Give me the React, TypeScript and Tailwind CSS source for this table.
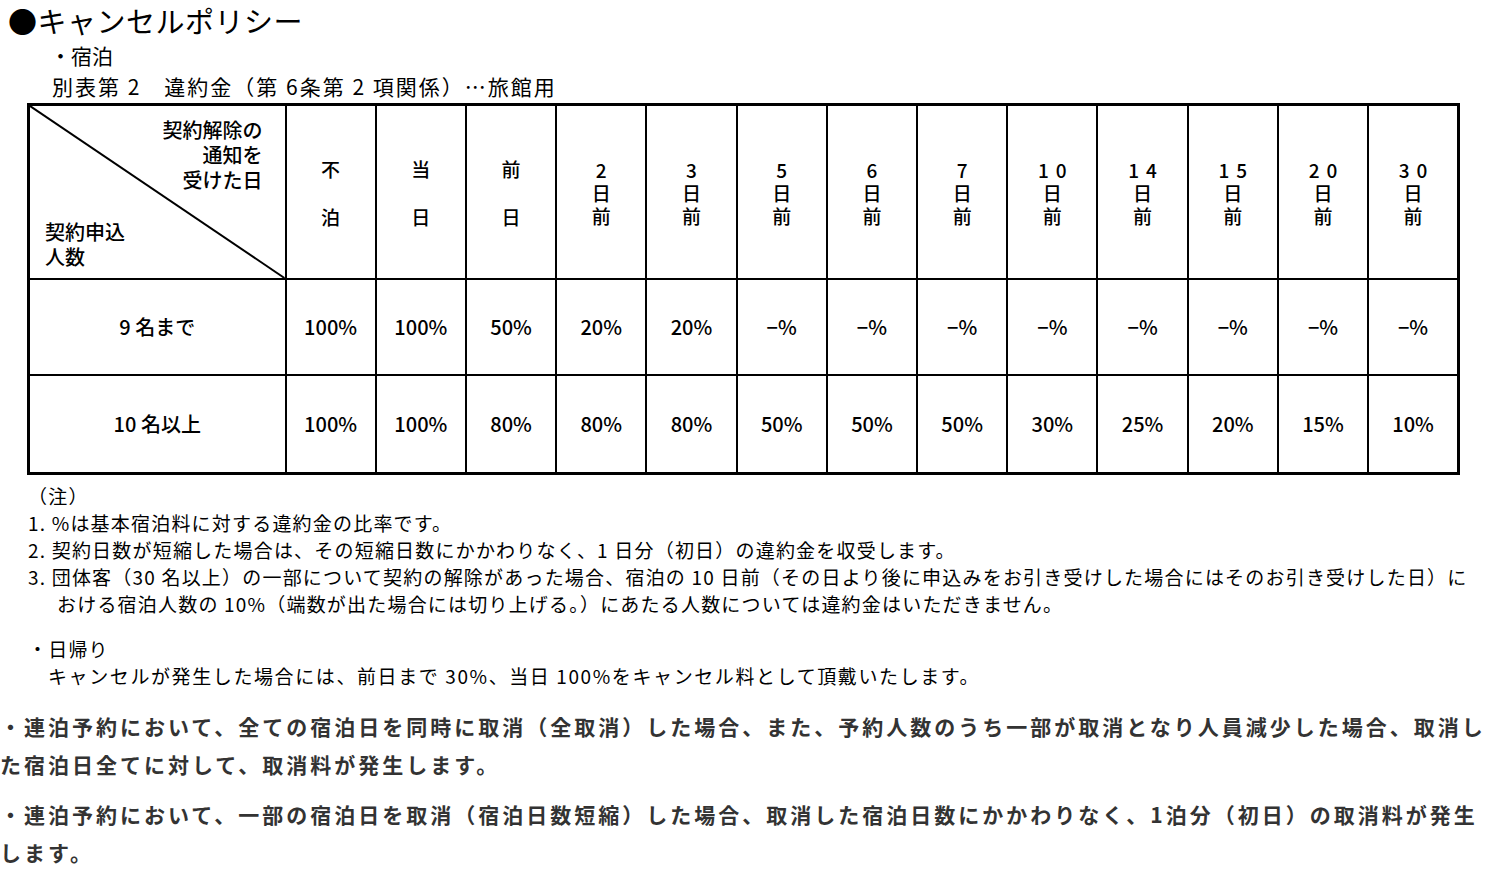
const font = "font-['Noto_Sans_CJK_JP','Noto_Sans',sans-serif]";

const heads: { lines: string[]; wide?: boolean }[] = [
  { lines: ["不", "泊"], wide: true },
  { lines: ["当", "日"], wide: true },
  { lines: ["前", "日"], wide: true },
  { lines: ["2", "日", "前"] },
  { lines: ["3", "日", "前"] },
  { lines: ["5", "日", "前"] },
  { lines: ["6", "日", "前"] },
  { lines: ["7", "日", "前"] },
  { lines: ["10", "日", "前"] },
  { lines: ["14", "日", "前"] },
  { lines: ["15", "日", "前"] },
  { lines: ["20", "日", "前"] },
  { lines: ["30", "日", "前"] },
];

const rows = [
  {
    label: "9 名まで",
    values: ["100%", "100%", "50%", "20%", "20%", "−%", "−%", "−%", "−%", "−%", "−%", "−%", "−%"],
  },
  {
    label: "10 名以上",
    values: ["100%", "100%", "80%", "80%", "80%", "50%", "50%", "50%", "30%", "25%", "20%", "15%", "10%"],
  },
];

function HeadCell({ lines, wide }: { lines: string[]; wide?: boolean }) {
  return (
    <th className="border-2 border-black p-0 align-middle font-medium">
      <div
        className={`flex flex-col items-center text-[19px] ${
          wide ? "gap-[25px] leading-[23px]" : "leading-[23px]"
        }`}
      >
        {lines.map((l, i) => (
          <span key={i} className={l.length > 1 ? "tracking-[7px] pl-[7px]" : ""}>
            {l}
          </span>
        ))}
      </div>
    </th>
  );
}

export default function App() {
  return (
    <div className={`w-[1500px] h-[876px] overflow-hidden bg-white text-black ${font}`}>
      {/* scanned policy sheet */}
      <div className="pl-[8px] pt-[1px]">
        <p className="text-[29px] leading-[38px] tracking-[0.5px]">●キャンセルポリシー</p>
        <p className="pl-[42px] text-[21px] leading-[32px]">・宿泊</p>
        <p className="pl-[44px] text-[21px] leading-[30px] tracking-[2px]">
          別表第 2　違約金（第 6条第 2 項関係）…旅館用
        </p>
      </div>

      <table className="ml-[27px] mt-[2px] w-[1433px] table-fixed border-collapse border-[3px] border-black">
        <colgroup>
          <col className="w-[257px]" />
        </colgroup>
        <thead>
          <tr className="h-[172px]">
            <th className="relative border-2 border-black p-0 font-medium">
              <svg className="absolute inset-0 h-full w-full" preserveAspectRatio="none" viewBox="0 0 100 100">
                <line x1="0" y1="0" x2="100" y2="100" stroke="black" strokeWidth="2" vectorEffect="non-scaling-stroke" />
              </svg>
              <div className="flex h-[172px] flex-col justify-between pt-[11px] pb-[9px] text-[20px] leading-[25px]">
                <div className="pr-[22px] text-right">
                  契約解除の
                  <br />
                  通知を
                  <br />
                  受けた日
                </div>
                <div className="pl-[15px] text-left">
                  契約申込
                  <br />
                  人数
                </div>
              </div>
            </th>
            {heads.map((h, i) => (
              <HeadCell key={i} {...h} />
            ))}
          </tr>
        </thead>
        <tbody>
          {rows.map((r, ri) => (
            <tr key={r.label} className={ri === 0 ? "h-[96px]" : "h-[98px]"}>
              <td className="border-2 border-black text-center text-[20px] font-medium">{r.label}</td>
              {r.values.map((v, i) => (
                <td key={i} className="border-2 border-black text-center text-[20px] font-medium">
                  {v}
                </td>
              ))}
            </tr>
          ))}
        </tbody>
      </table>

      <div className="mt-[7px] pl-[28px] text-[19px] leading-[27px] tracking-[1.2px] whitespace-nowrap">
        <p>（注）</p>
        <p>1. %は基本宿泊料に対する違約金の比率です。</p>
        <p>2. 契約日数が短縮した場合は、その短縮日数にかかわりなく、1 日分（初日）の違約金を収受します。</p>
        <p>
          3. 団体客（30 名以上）の一部について契約の解除があった場合、宿泊の 10 日前（その日より後に申込みをお引き受けした場合にはそのお引き受けした日）に
        </p>
        <p className="pl-[29px]">
          おける宿泊人数の 10%（端数が出た場合には切り上げる。）にあたる人数については違約金はいただきません。
        </p>
        <p className="mt-[18px]">・日帰り</p>
        <p className="pl-[20px] tracking-[1.6px]">
          キャンセルが発生した場合には、前日まで 30%、当日 100%をキャンセル料として頂戴いたします。
        </p>
      </div>

      {/* page text */}
      <div className="mt-[18px] text-[21px] font-bold leading-[38px] tracking-[3px] text-[#333]">
        <p>・連泊予約において、全ての宿泊日を同時に取消（全取消）した場合、また、予約人数のうち一部が取消となり人員減少した場合、取消した宿泊日全てに対して、取消料が発生します。</p>
        <p className="mt-[12px]">・連泊予約において、一部の宿泊日を取消（宿泊日数短縮）した場合、取消した宿泊日数にかかわりなく、1泊分（初日）の取消料が発生します。</p>
      </div>
    </div>
  );
}
